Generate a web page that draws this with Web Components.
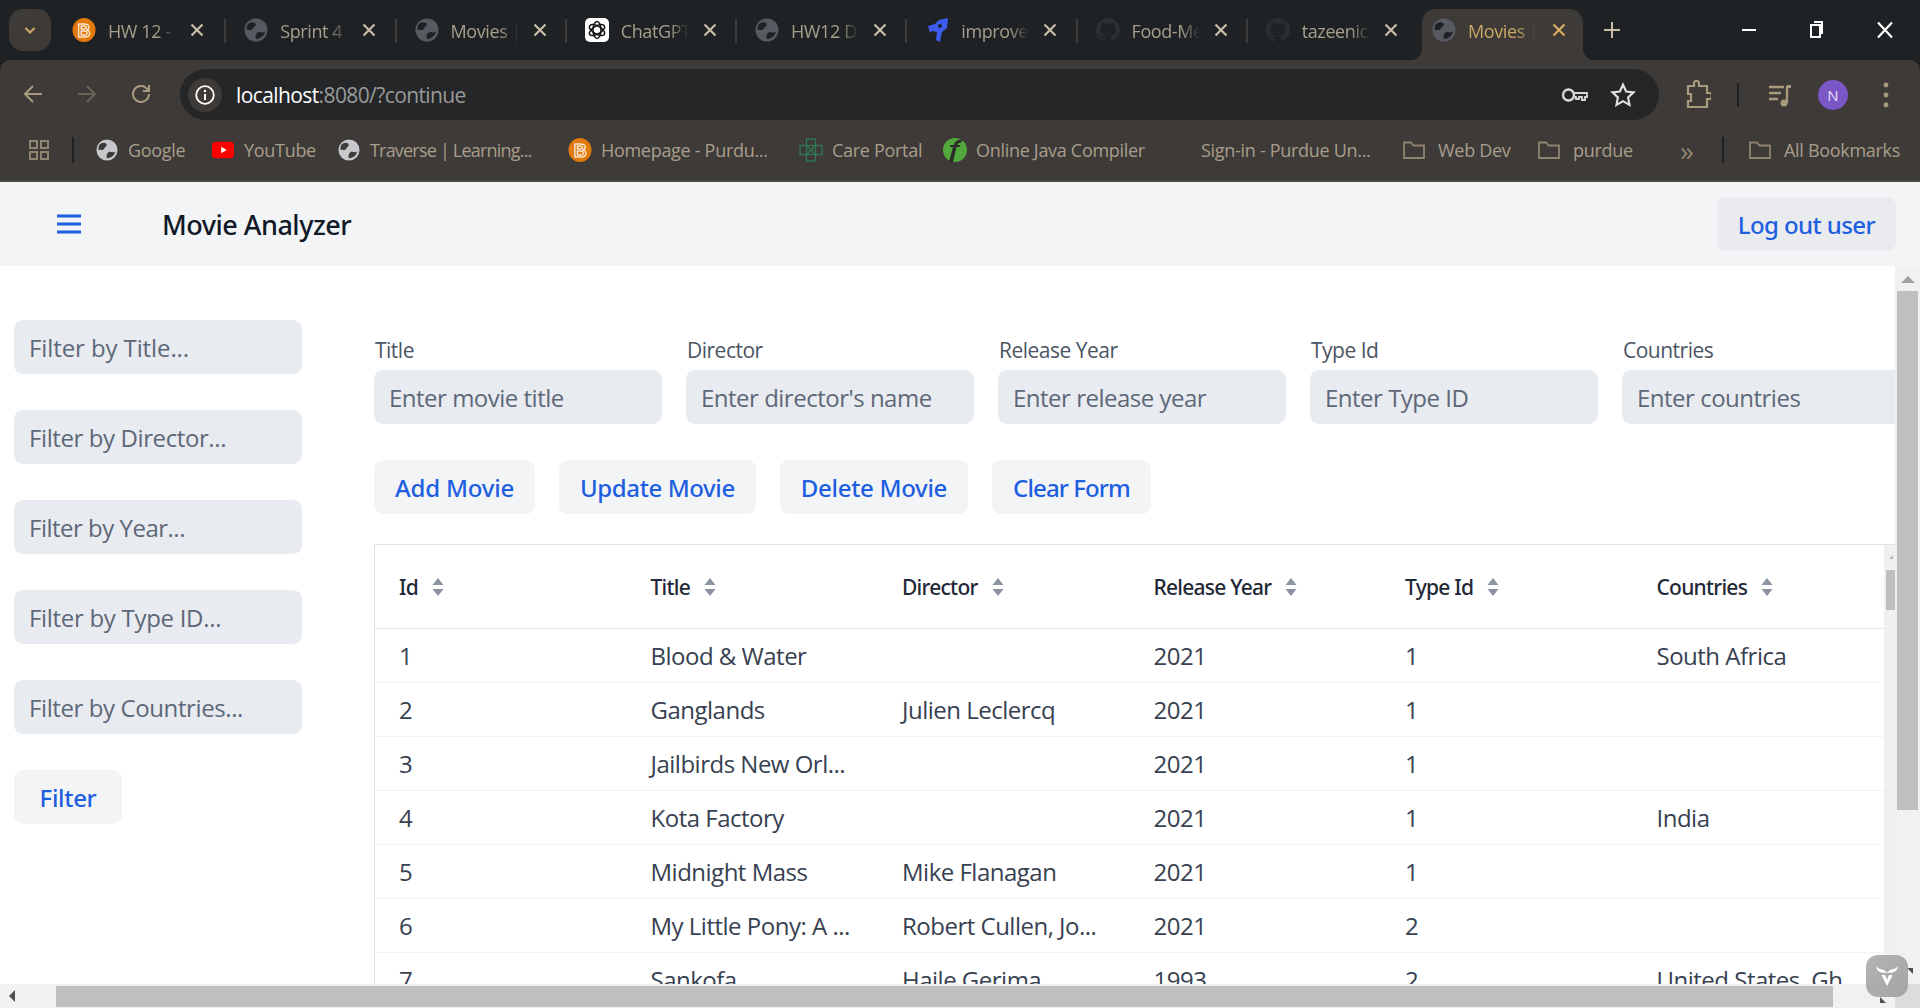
<!DOCTYPE html>
<html lang="en">
<head>
<meta charset="utf-8">
<title>Movies</title>
<style>
  html, body { margin: 0; height: 100%; overflow: hidden; background: #fff; }
  body { font-family: "Open Sans", "Noto Sans", sans-serif; display: flex; flex-direction: column; height: 1008px; }
</style>
</head>
<body>
<browser-chrome></browser-chrome>
<app-header></app-header>
<page-body></page-body>
<h-scrollbar></h-scrollbar>

<script>
(() => {
  const ICONS = {
    brightspace: `<svg viewBox="0 0 24 24" width="24" height="24"><ellipse cx="12" cy="12" rx="11.5" ry="12" fill="#e07a0c"/><text x="12" y="18.5" text-anchor="middle" font-family="Liberation Sans" font-weight="700" font-size="18" fill="none" stroke="#fff" stroke-width="1">B</text></svg>`,
    chatgpt: `<svg viewBox="0 0 24 24" width="24" height="24"><rect width="24" height="24" rx="5" fill="#fff"/><g fill="none" stroke="#111" stroke-width="1.5"><ellipse cx="12" cy="12" rx="4" ry="8.5"/><ellipse cx="12" cy="12" rx="4" ry="8.5" transform="rotate(60 12 12)"/><ellipse cx="12" cy="12" rx="4" ry="8.5" transform="rotate(120 12 12)"/></g></svg>`,
    improve: `<svg viewBox="0 0 24 24" width="24" height="24"><path d="M3 8 10 6 14 2 23 0 22 10 17 14 15 24 11 22 12 14 7 13 5 15 Z" fill="#3f5cf0"/><circle cx="15" cy="8" r="2" fill="#1e2224"/></svg>`,
    github: `<svg viewBox="0 0 16 16" width="24" height="24"><path fill="#2a2f35" d="M8 0C3.6 0 0 3.6 0 8c0 3.5 2.3 6.5 5.5 7.6.4.1.5-.2.5-.4v-1.4c-2.2.5-2.7-1-2.7-1-.4-.9-.9-1.2-.9-1.2-.7-.5.1-.5.1-.5.8.1 1.2.8 1.2.8.7 1.2 1.9.9 2.3.7.1-.5.3-.9.5-1.1-1.8-.2-3.6-.9-3.6-4 0-.9.3-1.6.8-2.1-.1-.2-.4-1 .1-2.1 0 0 .7-.2 2.2.8.6-.2 1.3-.3 2-.3s1.4.1 2 .3c1.5-1 2.2-.8 2.2-.8.4 1.1.2 1.9.1 2.1.5.6.8 1.3.8 2.1 0 3.1-1.9 3.7-3.6 3.9.3.2.6.7.6 1.5v2.2c0 .2.1.5.6.4C13.7 14.5 16 11.5 16 8c0-4.4-3.6-8-8-8z"/></svg>`,
    youtube: `<svg viewBox="0 0 24 24" width="22" height="22"><rect y="3" width="24" height="18" rx="4" fill="#f00"/><path d="M10 8.5 16 12 10 15.5Z" fill="#fff"/></svg>`,
    care: `<svg viewBox="0 0 24 24" width="24" height="24"><g fill="none" stroke="#2f7a55" stroke-width="1.3"><rect x="7.5" y="1" width="9" height="22"/><rect x="1" y="7.5" width="22" height="9"/><path d="M8 8l8 8M16 8l-8 8"/></g></svg>`,
    java: `<svg viewBox="0 0 24 24" width="24" height="24"><circle cx="12" cy="12" r="12" fill="#52a83c"/><path d="M6 24 10 9H7l.5-2H11c1-4 4-6 8-5l-1 3c-2-.5-3 0-3.500 2H17l-.5 2h-3L10 24Z" fill="#2b2b2b"/></svg>`,
    folder: `<svg viewBox="0 0 24 24" width="24" height="24"><path d="M2 4.500h7l2.500 3H22V20H2Z" fill="none" stroke="#8f8470" stroke-width="1.800"/></svg>`,
  };
  const ICON_GAP = { globe: 10, youtube: 10, folder: 12 };

  const globe = (size, fill, cut) => `<svg viewBox="0 0 24 24" width="${size}" height="${size}"><circle cx="12" cy="12" r="11.500" fill="${fill}"/><path fill="${cut}" d="M3.500 6.500C6 4 9 3.500 11 5c1.500 1.200.5 3-1 4-1 .8-1 2.500-3 3-1.500.4-3-.5-4.300 0-.2-2 .2-4 .8-5.500ZM12 21c-1-2.500-.5-5 1.500-6.500 2-1.300 3.500 0 5 0 1 0 1.800-.5 2.500-1-.7 4-4 7-9 7.500Z"/></svg>`;

  const icon = (name, where) => {
    if (name === 'globe') return where === 'tab' ? globe(24, '#575b61', '#1e2224') : globe(22, '#c6c8cc', '#3e3a38');
    return ICONS[name] || '';
  };

  class BrowserTab extends HTMLElement {
    constructor() {
      super();
      this.attachShadow({ mode: 'open' });
    }
    connectedCallback() {
      const active = this.hasAttribute('active');
      this.shadowRoot.innerHTML = `
        <style>
          :host {
            display: block;
            flex: none;
            width: 170.25px;
            height: 51px;
            box-sizing: border-box;
            position: relative;
            font-size: 18px;
          }
          .tab {
            height: 100%;
            box-sizing: border-box;
            display: flex;
            align-items: center;
            padding: 0 0 9px 18px;
            color: #a89e8c;
            position: relative;
          }
          .tab.on {
            color: #c9a765;
            background: #3e3a38;
            margin: 0 5px 0 4px;
            border-radius: 14px 14px 0 0;
            padding-left: 10px;
          }
          .tab.on::before, .tab.on::after {
            content: '';
            position: absolute;
            bottom: 0;
            width: 12px;
            height: 12px;
          }
          .tab.on::before { left: -12px; background: radial-gradient(circle at 0 0, transparent 12px, #3e3a38 12.5px); }
          .tab.on::after { right: -12px; background: radial-gradient(circle at 100% 0, transparent 12px, #3e3a38 12.5px); }
          .fav { flex: none; width: 24px; height: 24px; margin-right: 12px; }
          .label {
            flex: none;
            width: 68px;
            overflow: hidden;
            white-space: nowrap;
            padding-top: 2px;
            letter-spacing: -0.4px;
            -webkit-mask-image: linear-gradient(90deg, #000 72%, transparent 100%);
            mask-image: linear-gradient(90deg, #000 72%, transparent 100%);
          }
          .close { flex: none; margin-left: 9px; width: 24px; height: 24px; }
          .tab.on .close { margin-left: 11px; }
          .divider {
            position: absolute;
            right: 0;
            top: 10px;
            width: 2px;
            height: 24px;
            background: #3e3a38;
          }
        </style>
        <div class="tab ${active ? 'on' : ''}">
          <span class="fav">${icon(this.getAttribute('icon'), 'tab')}</span>
          <span class="label"><slot></slot></span>
          <svg class="close" viewBox="0 0 24 24"><path d="M6.500 6.500l11 11M17.500 6.500l-11 11" stroke="${active ? '#d8ac62' : '#c8bda8'}" stroke-width="2.200" fill="none"/></svg>
          ${this.hasAttribute('nodivider') || active ? '' : '<span class="divider"></span>'}
        </div>
      `;
    }
  }

  class BookmarkItem extends HTMLElement {
    constructor() {
      super();
      this.attachShadow({ mode: 'open' });
    }
    connectedCallback() {
      const ic = this.getAttribute('icon');
      this.shadowRoot.innerHTML = `
        <style>
          :host {
            display: flex;
            align-items: center;
            flex: none;
            width: ${this.getAttribute('width')}px;
            color: #a89e8c;
            font-size: 18px;
            white-space: nowrap;
            letter-spacing: var(--chrome-spacing, -0.3px);
          }
          svg { display: block; margin-right: ${ICON_GAP[ic] || 9}px; flex: none; }
        </style>
        ${ic ? icon(ic, 'bar') : ''}<slot></slot>
      `;
    }
  }

  class BrowserChrome extends HTMLElement {
    constructor() {
      super();
      this.attachShadow({ mode: 'open' });
    }
    connectedCallback() {
      this.shadowRoot.innerHTML = `
        <style>
          :host { display: block; flex: none; height: 182px; background: #1e2224; font-family: "Open Sans", sans-serif; }
          .strip { height: 60px; box-sizing: border-box; padding-top: 9px; display: flex; }
          .tab-search {
            flex: none;
            width: 42px;
            height: 42px;
            margin: 0 5px 0 9px;
            background: #3e3a38;
            border-radius: 14px;
            display: flex;
            align-items: center;
            justify-content: center;
          }
          .new { flex: none; margin: 9px 0 0 12px; }
          .win { margin-left: auto; display: flex; height: 42px; align-items: center; }
          .win svg { display: block; width: 24px; height: 24px; margin-right: 42px; }
          .win svg:nth-child(2) { margin-right: 46px; }
          .win svg:last-child { margin-right: 23px; }
          .tools {
            height: 60px;
            box-sizing: border-box;
            background: #3e3a38;
            border-radius: 10px 10px 0 0;
            display: flex;
            align-items: flex-start;
            padding: 9px 0 0 21px;
          }
          .nav { flex: none; width: 24px; height: 24px; margin: 13px 30px 0 0; }
          .nav:nth-of-type(3) { margin-right: 27px; }
          .omni {
            flex: none;
            width: 1479px;
            height: 51px;
            box-sizing: border-box;
            background: #242628;
            border-radius: 26px;
            display: flex;
            align-items: center;
            padding: 0 23px 0 8px;
            font-size: 21px;
            color: #9a9a9a;
            letter-spacing: -0.6px;
          }
          .info {
            width: 34px;
            height: 34px;
            border-radius: 50%;
            background: #3e3a38;
            display: flex;
            align-items: center;
            justify-content: center;
            margin-right: 14px;
          }
          .omni b { font-weight: 400; color: #fff; }
          .right { margin-left: auto; display: flex; gap: 21px; align-items: center; }
          .ext { flex: none; display: flex; align-items: center; height: 51px; margin-left: 26px; }
          .sep { width: 2px; height: 24px; background: #1e2224; }
          .avatar {
            width: 30px;
            height: 30px;
            border-radius: 50%;
            background: #7b56c6;
            color: #e8e0f8;
            font-size: 15px;
            display: flex;
            align-items: center;
            justify-content: center;
          }
          .bar {
            height: 62px;
            box-sizing: border-box;
            background: #3e3a38;
            border-bottom: 2px solid #4b4a41;
            display: flex;
            align-items: center;
            padding-left: 29px;
          }
          .apps { flex: none; width: 20px; height: 20px; }
          .bar .sep { flex: none; margin: 0 22px 0 23px; height: 26px; }
          .more { flex: none; width: 85px; color: #8f8470; font-size: 28px; line-height: 28px; text-align: center; box-sizing: border-box; padding-left: 15px; }
          .bar .sep.end { margin: 0 24px 0 0; }
        </style>
        <div class="strip">
          <div class="tab-search">
            <svg width="18" height="18" viewBox="0 0 18 18"><path d="M4.500 7l4.500 4.500L13.500 7" fill="none" stroke="#c9a765" stroke-width="2.200"/></svg>
          </div>
          <slot name="tabs"></slot>
          <svg class="new" width="24" height="24" viewBox="0 0 24 24"><path d="M12 4v16M4 12h16" stroke="#c8bda8" stroke-width="2"/></svg>
          <div class="win">
            <svg viewBox="0 0 24 24"><path d="M5 12h14" stroke="#fff" stroke-width="2"/></svg>
            <svg viewBox="0 0 24 24"><path d="M8 7h9v12H8Z M11 4h8v12" fill="none" stroke="#fff" stroke-width="2"/></svg>
            <svg viewBox="0 0 24 24"><path d="M5 4.500l14 15M19 4.500l-14 15" stroke="#fff" stroke-width="2.200" fill="none"/></svg>
          </div>
        </div>
        <div class="tools">
          <svg class="nav" viewBox="0 0 24 24"><path d="M21 12H4M12 4l-8 8 8 8" fill="none" stroke="#a89a7c" stroke-width="2"/></svg>
          <svg class="nav" viewBox="0 0 24 24"><path d="M3 12h17M12 4l8 8-8 8" fill="none" stroke="#6a6355" stroke-width="2"/></svg>
          <svg class="nav" viewBox="0 0 24 24"><path d="M20 12a8 8 0 1 1-2.500-5.800L20 8.500M20 3v6h-6" fill="none" stroke="#a89a7c" stroke-width="2"/></svg>
          <div class="omni">
            <span class="info">
              <svg width="22" height="22" viewBox="0 0 22 22"><circle cx="11" cy="11" r="8.800" fill="none" stroke="#fff" stroke-width="1.800"/><path d="M11 10v6" stroke="#fff" stroke-width="2"/><circle cx="11" cy="7" r="1.200" fill="#fff"/></svg>
            </span>
            <span><b>localhost</b>:8080/?continue</span>
            <span class="right">
              <svg width="28" height="24" viewBox="0 0 28 24"><circle cx="7.500" cy="12" r="5.500" fill="none" stroke="#d8d8d8" stroke-width="2.400"/><path d="M13 10h13v4h-2v3h-3v-3h-3v2h-3v-2h-2" fill="none" stroke="#d8d8d8" stroke-width="1.800"/></svg>
              <svg width="26" height="26" viewBox="0 0 24 24"><path d="M12 2.500l2.900 6.300 6.800.8-5 4.700 1.300 6.800-6-3.400-6 3.400 1.300-6.800-5-4.700 6.800-.8Z" fill="none" stroke="#e0e0e0" stroke-width="2"/></svg>
            </span>
          </div>
          <div class="ext">
            <svg width="26" height="30" viewBox="0 0 26 30"><path d="M3 6h6V3.500a2.500 2.500 0 0 1 5 0V6h8v7h2a3 3 0 0 1 0 6h-2v8H3v-6h3v-7H3Z" fill="none" stroke="#a89a7c" stroke-width="2.200"/></svg>
            <span class="sep" style="margin:0 29px 0 26px"></span>
            <svg width="24" height="26" viewBox="0 0 24 26" style="margin-right:26px"><path d="M1 5h15M1 11h12M1 17h9" stroke="#a89a7c" stroke-width="2.400"/><path d="M19 4v17" stroke="#a89a7c" stroke-width="2.400"/><path d="M19 3h4v3h-4" fill="#a89a7c"/><circle cx="16" cy="21" r="3.500" fill="#a89a7c"/></svg>
            <span class="avatar">N</span>
            <svg width="8" height="28" viewBox="0 0 8 28" style="margin-left:34px"><circle cx="4" cy="4" r="2.400" fill="#a89a7c"/><circle cx="4" cy="14" r="2.400" fill="#a89a7c"/><circle cx="4" cy="24" r="2.400" fill="#a89a7c"/></svg>
          </div>
        </div>
        <div class="bar">
          <svg class="apps" viewBox="0 0 20 20"><g fill="none" stroke="#8f8470" stroke-width="2"><rect x="1" y="1" width="7" height="7"/><rect x="12" y="1" width="7" height="7"/><rect x="1" y="12" width="7" height="7"/><rect x="12" y="12" width="7" height="7"/></g></svg>
          <span class="sep"></span>
          <slot name="marks"></slot>
          <span class="more">»</span>
          <span class="sep end"></span>
          <slot name="end"></slot>
        </div>
      `;
    }
  }

  class AppHeader extends HTMLElement {
    constructor() {
      super();
      this.attachShadow({ mode: 'open' });
    }
    connectedCallback() {
      this.shadowRoot.innerHTML = `
        <style>
          :host {
            display: flex;
            flex: none;
            height: 84px;
            box-sizing: border-box;
            align-items: center;
            background: #f3f4f6;
            padding: 0 24px 0 57px;
            font-family: "Open Sans", sans-serif;
          }
          svg { flex: none; display: block; margin-right: 81px; }
          h1 { margin: 0; font-family: "Noto Sans", sans-serif; font-size: 27px; font-weight: 500; color: #111827; letter-spacing: -0.5px; }
          ui-button { margin-left: auto; --btn-bg: #e9ebef; --btn-spacing: -0.6px; }
        </style>
        <svg width="24" height="24" viewBox="0 0 24 24"><path d="M0.500 4h23M0.500 12h23M0.500 20h23" stroke="#1d5fe0" stroke-width="3" stroke-linecap="round"/></svg>
        <h1>Movie Analyzer</h1>
        <ui-button>Log out user</ui-button>
      `;
    }
  }

  class UiButton extends HTMLElement {
    constructor() {
      super();
      this.attachShadow({ mode: 'open' });
    }
    connectedCallback() {
      this.shadowRoot.innerHTML = `
        <style>
          :host {
            display: inline-flex;
            flex: none;
            align-items: center;
            justify-content: center;
            height: 54px;
            box-sizing: border-box;
            padding: 0 21px;
            border-radius: 9px;
            background: var(--btn-bg, #f3f4f6);
            color: #1d5fe0;
            font-family: "Noto Sans", sans-serif;
            font-size: 24px;
            font-weight: 500;
            letter-spacing: var(--btn-spacing, -0.3px);
            white-space: nowrap;
          }
        </style>
        <slot></slot>
      `;
    }
  }

  class TextField extends HTMLElement {
    constructor() {
      super();
      this.attachShadow({ mode: 'open' });
    }
    connectedCallback() {
      const label = this.getAttribute('label');
      this.shadowRoot.innerHTML = `
        <style>
          :host { display: block; flex: none; width: 288px; letter-spacing: var(--app-spacing, -0.5px); }
          .label { display: block; font-size: 21px; line-height: 30px; color: #4b5563; margin: 0 0 5px 1px; }
          .box {
            height: 54px;
            box-sizing: border-box;
            background: #e8ebf0;
            border-radius: 9px;
            display: flex;
            align-items: center;
            padding: 0 15px;
            font-size: 24px;
            color: #5e6878;
            white-space: nowrap;
          }
        </style>
        ${label ? `<span class="label">${label}</span>` : ''}
        <div class="box"><slot></slot></div>
      `;
    }
  }

  class FilterSidebar extends HTMLElement {
    constructor() {
      super();
      this.attachShadow({ mode: 'open' });
    }
    connectedCallback() {
      this.shadowRoot.innerHTML = `
        <style>
          :host {
            display: flex;
            flex: none;
            flex-direction: column;
            align-items: flex-start;
            gap: 36px;
            width: 288px;
            margin-left: 14px;
            padding-top: 54px;
          }
          .go { width: 108px; padding: 0; }
        </style>
        <text-field style="--app-spacing:-0.1px">Filter by Title...</text-field>
        <text-field style="--app-spacing:-0.4px">Filter by Director...</text-field>
        <text-field>Filter by Year...</text-field>
        <text-field style="--app-spacing:-0.3px">Filter by Type ID...</text-field>
        <text-field style="--app-spacing:-0.4px">Filter by Countries...</text-field>
        <ui-button class="go">Filter</ui-button>
      `;
    }
  }

  class MovieForm extends HTMLElement {
    constructor() {
      super();
      this.attachShadow({ mode: 'open' });
    }
    connectedCallback() {
      this.shadowRoot.innerHTML = `
        <style>
          :host { display: block; padding-top: 69px; }
          .fields { display: flex; gap: 24px; }
          .actions { display: flex; gap: 24px; margin-top: 36px; }
        </style>
        <div class="fields">
          <text-field label="Title">Enter movie title</text-field>
          <text-field label="Director">Enter director's name</text-field>
          <text-field label="Release Year">Enter release year</text-field>
          <text-field label="Type Id">Enter Type ID</text-field>
          <text-field label="Countries">Enter countries</text-field>
        </div>
        <div class="actions">
          <ui-button style="--btn-spacing:-0.2px">Add Movie</ui-button>
          <ui-button style="--btn-spacing:-0.4px">Update Movie</ui-button>
          <ui-button>Delete Movie</ui-button>
          <ui-button style="--btn-spacing:-0.9px">Clear Form</ui-button>
        </div>
      `;
    }
  }

  const COLUMNS = ['Id', 'Title', 'Director', 'Release Year', 'Type Id', 'Countries'];
  const ROWS = [
    ['1', 'Blood & Water', '', '2021', '1', 'South Africa'],
    ['2', 'Ganglands', 'Julien Leclercq', '2021', '1', ''],
    ['3', 'Jailbirds New Orl...', '', '2021', '1', ''],
    ['4', 'Kota Factory', '', '2021', '1', 'India'],
    ['5', 'Midnight Mass', 'Mike Flanagan', '2021', '1', ''],
    ['6', 'My Little Pony: A ...', 'Robert Cullen, Jo...', '2021', '2', ''],
    ['7', 'Sankofa', 'Haile Gerima', '1993', '2', 'United States, Gh'],
  ];

  const escapeHtml = (s) => s.replace(/&/g, '&amp;');

  class MovieTable extends HTMLElement {
    constructor() {
      super();
      this.attachShadow({ mode: 'open' });
    }
    connectedCallback() {
      const head = COLUMNS.map((c) => `
        <div class="th">${c}
          <svg width="12" height="18" viewBox="0 0 12 18"><path d="M6 0l5.500 7H.500ZM6 18 .500 11h11Z" fill="#8b92a1"/></svg>
        </div>`).join('');
      const body = ROWS.map((r) => `
        <div class="tr">${r.map((c) => `<div class="td">${escapeHtml(c)}</div>`).join('')}</div>`).join('');

      this.shadowRoot.innerHTML = `
        <style>
          :host {
            display: flex;
            height: 440px;
            margin-top: 30px;
            border-top: 1px solid #dfe2e8;
            border-left: 1px solid #dfe2e8;
            overflow: hidden;
          }
          .view { flex: none; width: 1509px; overflow: hidden; letter-spacing: var(--app-spacing, -0.5px); }
          .tr, .thead { display: grid; grid-template-columns: repeat(6, 251.5px); align-items: center; white-space: nowrap; }
          .thead { height: 83px; border-bottom: 1px solid #e5e7eb; box-sizing: content-box; }
          .tr { height: 53px; border-bottom: 1px solid #f2f3f5; }
          .th {
            padding-left: 24px;
            font-family: "Noto Sans", sans-serif;
            font-size: 21px;
            font-weight: 500;
            letter-spacing: -0.75px;
            color: #1f2937;
            display: flex;
            align-items: center;
            gap: 14px;
          }
          .td { padding-left: 24px; font-size: 24px; color: #374151; }
          .bar { flex: none; width: 11px; background: #f0f0f0; position: relative; }
          .bar i { display: block; width: 9px; height: 40px; background: #bfbfbf; margin: 25px 0 0 2px; }
          .bar::before {
            content: '';
            position: absolute;
            top: 10px;
            right: 2px;
            border-left: 4px solid transparent;
            border-bottom: 4px solid #b5b5b5;
          }
        </style>
        <div class="view">
          <div class="thead">${head}</div>
          ${body}
        </div>
        <div class="bar"><i></i></div>
      `;
    }
  }

  class PageBody extends HTMLElement {
    constructor() {
      super();
      this.attachShadow({ mode: 'open' });
    }
    connectedCallback() {
      this.shadowRoot.innerHTML = `
        <style>
          :host { display: flex; flex: none; height: 718px; overflow: hidden; font-family: "Open Sans", sans-serif; position: relative; }
          .work { flex: none; width: 1895px; display: flex; overflow: hidden; }
          .main { flex: none; width: 1521px; margin-left: 72px; overflow: hidden; }
          .vbar { flex: none; width: 25px; box-sizing: border-box; padding: 25px 2px 0; background: #f1f1f1; position: relative; }
          .vbar i { display: block; height: 519px; background: #bfbfbf; }
          .vbar b {
            position: absolute;
            top: 10px;
            left: 6px;
            width: 0;
            height: 0;
            border-left: 7px solid transparent;
            border-right: 7px solid transparent;
            border-bottom: 7px solid #a0a0a0;
          }
        </style>
        <div class="work">
          <filter-sidebar></filter-sidebar>
          <div class="main">
            <movie-form></movie-form>
            <movie-table></movie-table>
          </div>
        </div>
        <div class="vbar"><b></b><i></i></div>
      `;
    }
  }

  class HScrollbar extends HTMLElement {
    constructor() {
      super();
      this.attachShadow({ mode: 'open' });
    }
    connectedCallback() {
      this.shadowRoot.innerHTML = `
        <style>
          :host { display: block; flex: none; height: 24px; box-sizing: border-box; padding: 2px 0 1px 56px; background: #f1f1f1; position: relative; }
          i { display: block; width: 1777px; height: 21px; background: #bfbfbf; }
          .arrow { position: absolute; left: 9px; top: 6px; border: 6px solid transparent; border-left: 0; border-right: 6px solid #505050; }
          .corner { position: absolute; right: 0; top: 0; width: 25px; height: 24px; background: #dcdcdc; }
          .badge {
            position: absolute;
            left: 1866px;
            top: -29px;
            width: 42px;
            height: 42px;
            border-radius: 12px;
            background: linear-gradient(135deg, #b4b4b4, #a4a4a4);
          }
          .badge svg { display: block; }
          .tick { position: absolute; width: 0; height: 0; border-style: solid; border-width: 0; }
          .tick.a { left: 1907px; top: -16px; border-top: 6px solid #505050; border-left: 6px solid transparent; }
          .tick.b { left: 1880px; top: 13px; border-bottom: 6px solid #505050; border-right: 6px solid transparent; }
        </style>
        <span class="arrow"></span>
        <i></i>
        <span class="corner"></span>
        <span class="tick a"></span>
        <span class="tick b"></span>
        <span class="badge">
          <svg width="42" height="42" viewBox="0 0 42 42"><path d="M10 11C12 14 16 14.500 18 15L21 17.500 24 15C26 14.500 30 14 32 11 31.500 16 28 17.800 24 17.800H18C14 17.800 10.500 16 10 11Z" fill="#fff"/><path d="M15.500 20H19L21 25 23 20H26.500L21 31Z" fill="#fff"/></svg>
        </span>
      `;
    }
  }

  // children first, so nested elements are ready when parents stamp their markup
  customElements.define('ui-button', UiButton);
  customElements.define('text-field', TextField);
  customElements.define('browser-tab', BrowserTab);
  customElements.define('bookmark-item', BookmarkItem);
  customElements.define('filter-sidebar', FilterSidebar);
  customElements.define('movie-form', MovieForm);
  customElements.define('movie-table', MovieTable);
  customElements.define('page-body', PageBody);
  customElements.define('app-header', AppHeader);
  customElements.define('h-scrollbar', HScrollbar);
  customElements.define('browser-chrome', BrowserChrome);

  // tabs and bookmarks are passed in through the chrome's slots
  const chrome = document.querySelector('browser-chrome');
  const tabs = [
    ['brightspace', 'HW 12 - Assign'],
    ['globe', 'Sprint 4 Board'],
    ['globe', 'Movies | Home'],
    ['chatgpt', 'ChatGPT Chat'],
    ['globe', 'HW12 Document'],
    ['improve', 'improve this'],
    ['github', 'Food-Menu'],
    ['github', 'tazeenic/repo'],
    ['globe', 'Movies | Home'],
  ];
  const tabWrap = document.createElement('div');
  tabWrap.slot = 'tabs';
  tabWrap.style.display = 'flex';
  tabs.forEach(([ic, text], i) => {
    const t = document.createElement('browser-tab');
    t.setAttribute('icon', ic);
    if (i === 0) {
      t.style.marginLeft = '-2px';
      t.style.width = '172.25px';
    }
    if (i === 7) t.setAttribute('nodivider', '');
    if (i === 8) t.setAttribute('active', '');
    t.textContent = text;
    tabWrap.appendChild(t);
  });
  chrome.appendChild(tabWrap);

  const marks = [
    ['globe', 'Google', 116],
    ['youtube', 'YouTube', 126],
    ['globe', 'Traverse | Learning...', 230],
    ['brightspace', 'Homepage - Purdu...', 231],
    ['care', 'Care Portal', 144],
    ['java', 'Online Java Compiler', 258],
    ['', 'Sign-in - Purdue Un...', 201],
    ['folder', 'Web Dev', 135],
    ['folder', 'purdue', 100],
  ];
  const markWrap = document.createElement('div');
  markWrap.slot = 'marks';
  markWrap.style.display = 'flex';
  marks.forEach(([ic, text, w]) => {
    const b = document.createElement('bookmark-item');
    if (ic) b.setAttribute('icon', ic);
    b.setAttribute('width', w);
    if (text.startsWith('Traverse')) b.style.setProperty('--chrome-spacing', '-0.8px');
    b.textContent = text;
    markWrap.appendChild(b);
  });
  chrome.appendChild(markWrap);

  const all = document.createElement('bookmark-item');
  all.slot = 'end';
  all.setAttribute('icon', 'folder');
  all.setAttribute('width', 150);
  all.textContent = 'All Bookmarks';
  chrome.appendChild(all);
})();
</script>
</body>
</html>
